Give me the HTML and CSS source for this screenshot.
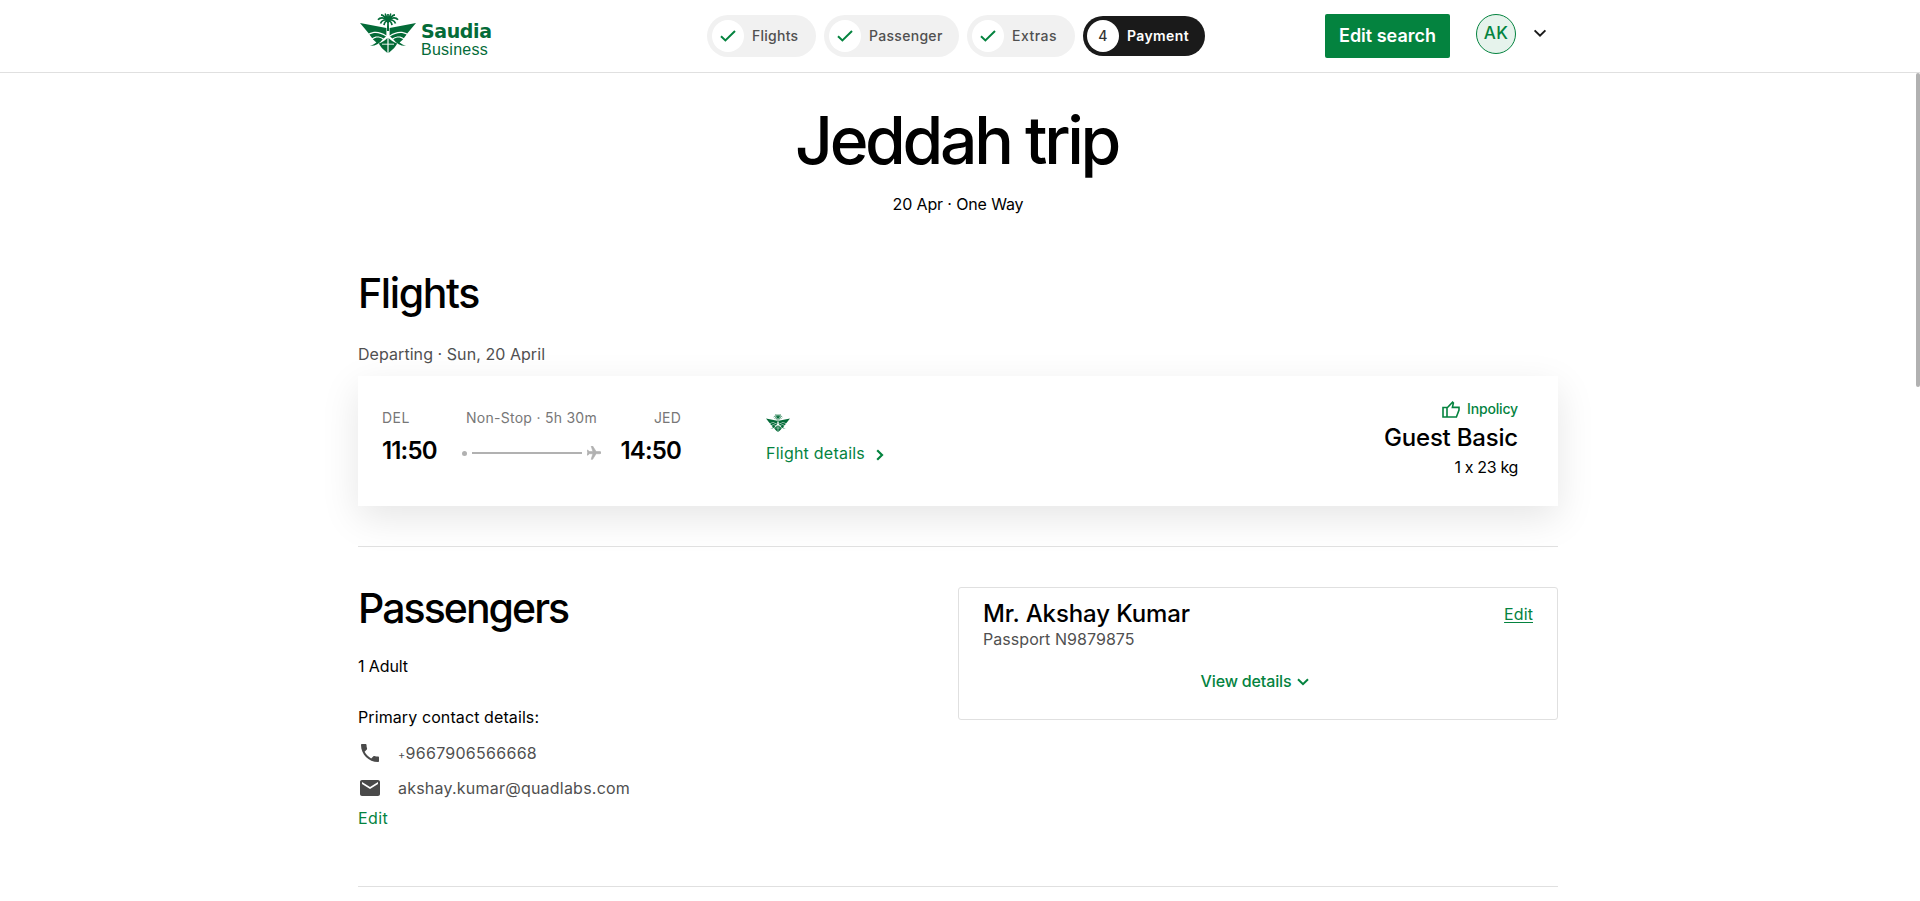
FILE: index.html
```html
<!DOCTYPE html>
<html lang="en">
<head>
<meta charset="utf-8">
<title>Jeddah trip</title>
<link rel="stylesheet" href="styles.css">
</head>
<body>
<svg class="defs" width="0" height="0">
  <symbol id="bird" viewBox="0 0 56 40">
    <g fill="#046b38">
      <g id="half">
        <path d="M0 10 L26.400 15 V22.400 C20 18.200 14 17.800 8.800 20.600 Z"/>
        <path d="M9.400 21.600 C14 18.800 20 19.400 26 23.600 L23.600 25.600 C19 23 15.400 23 12.200 25.200 Z"/>
        <path d="M12.800 26.200 C16 24 19.600 24.200 22.800 26.200 C19 31 15 33.200 10 32.800 C12.400 32 14.600 31 16.400 29.400 Z"/>
        <path d="M27.400 25 L27.400 40 C22.800 36.600 20 33.200 18.800 30.600 C22 29.400 25 27.400 27.400 25 Z"/>
      </g>
      <use href="#half" transform="matrix(-1 0 0 1 56 0)"/>
      <path d="M27.200 9 h1.600 l.3 9 h-2.200z"/>
    </g>
    <path d="M22 31.200 H34" stroke="#fff" stroke-width=".9" fill="none"/>
    <path d="M28 10 V1 M28 9 C26 5 24 2 21 1.800 M28 9 C30 5 32 2 35 1.800 M28 9 C26 3 26 1 24.800 .8 M28 9 C30 3 30 1 31.200 .8 M28 8 C24 3.800 20 4.200 18 6.800 M28 8 C32 3.800 36 4.200 38 6.800 M28 8 C25 6 21.500 7 20.500 10.500 M28 8 C31 6 34.500 7 35.500 10.500 M28 8 C26.200 8 24.400 9 24 12.200 M28 8 C29.800 8 31.600 9 32 12.200" stroke="#046b38" stroke-width="1.700" fill="none"/>
  </symbol>
</svg>
<header class="topbar">
  <div class="topbar-inner">
    <a class="brand">
      <svg class="brand-bird" width="56" height="40"><use href="#bird"/></svg>
      <span class="brand-text"><b class="brand-name">Saudia</b><span class="brand-sub">Business</span></span>
    </a>
    <nav class="steps">
      <span class="step s1"><i class="dot"><svg width="16" height="12" viewBox="0 0 16 12"><path d="M1 6.200 L5.400 10.400 L15 1"/></svg></i>Flights</span>
      <span class="step s2"><i class="dot"><svg width="16" height="12" viewBox="0 0 16 12"><path d="M1 6.200 L5.400 10.400 L15 1"/></svg></i>Passenger</span>
      <span class="step s3"><i class="dot"><svg width="16" height="12" viewBox="0 0 16 12"><path d="M1 6.200 L5.400 10.400 L15 1"/></svg></i>Extras</span>
      <span class="step s4 active"><i class="dot">4</i>Payment</span>
    </nav>
    <button class="search">Edit search</button>
    <span class="avatar">AK</span>
    <svg class="caret" width="14" height="9" viewBox="0 0 14 9"><path d="M1.600 1.400 L7 6.600 L12.400 1.400"/></svg>
  </div>
</header>
<main class="page">
  <h1>Jeddah trip</h1>
  <p class="sub">20 Apr · One Way</p>
  <h2 class="h-flights">Flights</h2>
  <p class="departing">Departing · Sun, 20 April</p>
  <section class="flight">
    <div class="route">
      <span class="code from">DEL</span>
      <span class="code mid">Non-Stop · 5h 30m</span>
      <span class="code end">JED</span>
      <span class="time">11:50</span>
      <span class="track"><i class="track-dot"></i><i class="track-line"></i><svg width="14" height="14" viewBox="2 2 20 20"><path transform="rotate(90 12 12)" d="M21 16v-2l-8-5V3.500c0-.83-.67-1.500-1.500-1.500S10 2.670 10 3.500V9l-8 5v2l8-2.500V19l-2 1.500V22l3.500-1 3.500 1v-1.500L13 19v-5.500l8 2.500z"/></svg></span>
      <span class="time end">14:50</span>
    </div>
    <div class="carrier">
      <svg width="24" height="18" viewBox="0 0 56 40" preserveAspectRatio="none"><use href="#bird" width="56" height="40"/></svg>
      <a class="details">Flight details<svg width="8" height="12" viewBox="0 0 8 12"><path d="M1.200 1.200 L6 6 L1.200 10.800"/></svg></a>
    </div>
    <div class="fare">
      <span class="policy"><svg width="18" height="17" viewBox="0 0 18 17"><path d="M1 6.500 H5 V16 H1 Z M5 7 L10.600 1.200 L11.400 2 L10.400 6.400 H17 V9 L14.400 16 H5"/></svg>Inpolicy</span>
      <span class="fare-name">Guest Basic</span>
      <span class="bag">1 x 23 kg</span>
    </div>
  </section>
  <hr class="rule">
  <section class="people">
    <div>
      <h2 class="h-people">Passengers</h2>
      <p class="adult">1 Adult</p>
      <p class="primary">Primary contact details:</p>
      <p class="contact c1"><svg width="18" height="18" viewBox="3 3 18 18"><path d="M6.620 10.790c1.440 2.830 3.760 5.140 6.590 6.590l2.200-2.200c.27-.27.67-.36 1.020-.24 1.120.37 2.330.57 3.570.57.55 0 1 .45 1 1V20c0 .55-.45 1-1 1-9.390 0-17-7.610-17-17 0-.55.45-1 1-1h3.500c.55 0 1 .45 1 1 0 1.250.2 2.450.57 3.570.11.35.03.74-.25 1.020l-2.200 2.200z"/></svg><span><small>+</small>9667906566668</span></p>
      <p class="contact c2"><svg width="20" height="16" viewBox="2 4 20 16"><path d="M20 4H4c-1.100 0-1.990.9-1.990 2L2 18c0 1.100.9 2 2 2h16c1.100 0 2-.9 2-2V6c0-1.100-.9-2-2-2zm0 4l-8 5-8-5V6l8 5 8-5v2z"/></svg><span>akshay.kumar@quadlabs.com</span></p>
      <p class="edit">Edit</p>
    </div>
    <article class="person">
      <div class="person-head"><h3>Mr. Akshay Kumar</h3><a class="person-edit">Edit</a></div>
      <p class="passport">Passport N9879875</p>
      <p class="view">View details<svg width="12" height="8" viewBox="0 0 12 8"><path d="M1 1.200 L6 6.200 L11 1.200"/></svg></p>
    </article>
  </section>
  <hr class="rule last">
</main>
<div class="scrollbar"></div>
</body>
</html>
```
FILE: styles.css
```css
* { box-sizing: border-box; }
body { margin: 0; height: 901px; overflow: hidden; background: #fff; color: #000; font: 400 16px/24px Inter, "Liberation Sans", sans-serif; font-feature-settings: "calt" 0; }
h1, h2, h3, p { margin: 0; font-weight: 500; }
p { font-weight: 400; }
i { font-style: normal; }
span { white-space: nowrap; }
.defs { display: block; position: absolute; }

/* Header */
.topbar { height: 73px; border-bottom: 1px solid #e0e0e0; padding-right: 4px; }
.topbar-inner { width: 1200px; height: 72px; margin: 0 auto; display: flex; align-items: flex-start; }
.brand { display: flex; width: 349px; padding: 13px 0 0 2px; color: #046b38; }
.brand-text { display: flex; flex-direction: column; align-items: flex-start; margin-left: 5px; }
.brand-name { font: 700 19px/20px "DejaVu Sans", sans-serif; letter-spacing: -0.4px; padding-top: 8px; }
.brand-sub { font: 400 16px/17px "Liberation Sans", sans-serif; letter-spacing: 0.25px; }
.steps { display: flex; align-items: center; gap: 8px; padding-top: 15px; width: 618px; }
.step { display: flex; align-items: center; height: 42px; padding: 0 0 1px 5px; border-radius: 21px; background: #f1f1f1; color: #505050; font-size: 14px; font-weight: 500; }
.dot { width: 32px; height: 32px; margin-right: 8px; border-radius: 50%; background: #fff; display: flex; align-items: center; justify-content: center; }
.dot path { fill: none; stroke: #04833f; stroke-width: 2; }
.s1 { width: 109px; letter-spacing: 0.25px; }
.s2 { width: 135px; letter-spacing: 0.3px; }
.s3 { width: 108px; letter-spacing: 0.5px; }
.s4 { width: 122px; letter-spacing: 0.38px; }
.active { height: 40px; padding-left: 4px; background: #1a1a1a; color: #fff; font-weight: 600; }
.active .dot { color: #333; font-weight: 500; }
.search { width: 125px; height: 44px; margin-top: 14px; padding: 0 0 1px; border: 0; border-radius: 2px; background: #04833f; color: #fff; font: 600 18px/24px Inter, sans-serif; }
.avatar { width: 40px; height: 40px; margin: 14px 0 0 26px; padding-bottom: 3px; border: 1px solid #04833f; border-radius: 50%; background: #e6f3ec; color: #04833f; font-size: 17px; font-weight: 500; letter-spacing: 0.4px; display: flex; align-items: center; justify-content: center; }
.caret { margin: 29px 0 0 17px; fill: none; stroke: #1a1a1a; stroke-width: 2; }

/* Trip summary, centred in the width left of the scrollbar */
.page { width: 1204px; margin: 0 auto; padding: 27px 4px 0 0; }
h1 { font-size: 66px; line-height: 80px; height: 80px; text-align: center; font-weight: 550; letter-spacing: -3.3px; text-indent: -3px; }
h2 { font-size: 41px; line-height: 52px; height: 50px; }
.sub { margin-top: 12px; text-align: center; letter-spacing: -0.13px; }
.h-flights { margin-top: 51px; letter-spacing: -1.37px; }
.departing { margin-top: 25px; color: #505050; letter-spacing: 0.06px; }

/* Flight card */
.flight { height: 130px; margin-top: 10px; padding: 0 40px 0 24px; display: flex; background: #fff; box-shadow: 0 12px 36px rgba(0,0,0,.1); }
.route { display: grid; grid-template-columns: 80px 139px 80px; grid-template-rows: 20px 30px; row-gap: 7px; padding-top: 32px; }
.code { font-size: 14px; line-height: 20px; color: #777; letter-spacing: 0.2px; }
.from { letter-spacing: 0.5px; }
.mid { text-align: center; letter-spacing: 0.27px; }
.end { text-align: right; }
.time { font-size: 24px; line-height: 32px; font-weight: 600; letter-spacing: -0.85px; }
.track { display: flex; align-items: center; padding-top: 6px; fill: #b1b1b1; }
.track-dot { width: 5px; height: 5px; border-radius: 50%; background: #b1b1b1; }
.track-line { width: 110px; height: 2px; margin: 0 5px; background: #b1b1b1; }
.track path { stroke: #b1b1b1; stroke-width: 1; }
.carrier { margin-left: 85px; padding-top: 38px; }
.carrier > svg { display: block; margin-bottom: 9px; }
.details { display: flex; align-items: center; gap: 11px; color: #04833f; letter-spacing: 0.23px; }
.details svg { margin-top: 4px; fill: none; stroke: #04833f; stroke-width: 2.2; }
.fare { margin-left: auto; display: flex; flex-direction: column; align-items: flex-end; padding-top: 23px; }
.policy { display: flex; gap: 7px; font-size: 14px; line-height: 20px; font-weight: 500; color: #04833f; letter-spacing: -0.16px; }
.policy svg { margin-top: 2px; fill: none; stroke: #04833f; stroke-width: 1.6; }
.fare-name { margin-top: 3px; font-size: 24px; line-height: 32px; height: 30px; font-weight: 500; letter-spacing: -0.2px; }
.bag { margin-top: 3px; letter-spacing: -0.35px; }

.rule { height: 1px; margin: 40px 0 0; border: 0; background: #e0e0e0; }

/* Passengers */
.people { display: grid; grid-template-columns: 600px 600px; padding-top: 35px; align-items: start; }
.h-people { letter-spacing: -1.95px; }
.adult { margin-top: 22px; letter-spacing: -0.1px; }
.primary { margin-top: 27px; letter-spacing: 0.1px; }
.contact { display: flex; align-items: center; height: 24px; color: #505050; fill: #4a4a4a; }
.c1 { margin-top: 12px; padding-left: 3px; letter-spacing: 0.27px; }
.c1 svg { margin-right: 19px; }
.c2 { margin-top: 11px; padding-left: 2px; letter-spacing: 0.22px; }
.c2 svg { margin-right: 18px; }
small { font-size: 11px; line-height: 1; }
.edit { margin-top: 6px; color: #04833f; letter-spacing: 0.4px; }
.person { height: 133px; margin-top: 5px; padding: 12px 24px 0; border: 1px solid #e0e0e0; border-radius: 3px; }
.person-head { display: flex; justify-content: space-between; align-items: center; height: 28px; }
.person-edit { color: #04833f; text-decoration: underline; text-underline-offset: 2px; letter-spacing: 0.1px; }
h3 { font-size: 24px; line-height: 28px; letter-spacing: -0.11px; }
.passport { color: #505050; margin-top: -1px; letter-spacing: 0.05px; }
.view { display: flex; align-items: center; justify-content: center; gap: 6px; margin-top: 18px; padding-right: 6px; color: #04833f; font-weight: 500; letter-spacing: -0.15px; }
.view svg { fill: none; stroke: #04833f; stroke-width: 2; margin-top: 2px; }
.last { margin-top: 56px; }

.scrollbar { position: absolute; right: 0; top: 73px; width: 4px; height: 314px; border-radius: 2px; background: #b1b1b1; }
```
